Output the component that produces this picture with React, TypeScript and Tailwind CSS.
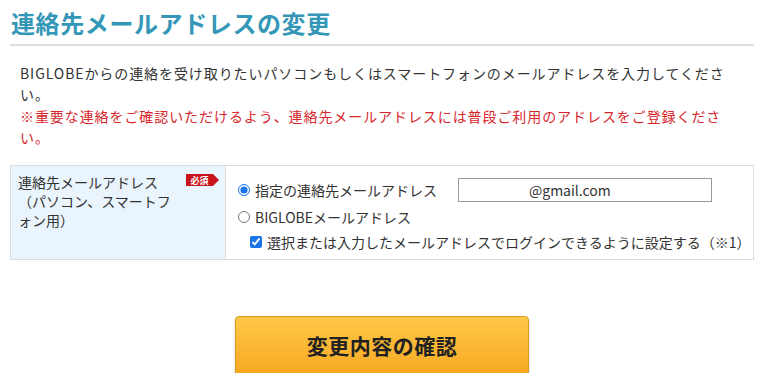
import React from 'react';

const font = { fontFamily: '"Noto Sans CJK JP", "Noto Sans", sans-serif' };

function RequiredBadge() {
  return (
    <span className="absolute left-[175px] top-[8px] flex h-[12px] items-center">
      <span className="flex h-[12px] w-[27px] items-center justify-center bg-[#c8141c] text-[9px] font-bold leading-none text-white">
        必須
      </span>
      <span className="h-0 w-0 border-y-[6px] border-l-[6px] border-y-transparent border-l-[#c8141c]" />
    </span>
  );
}

export default function App() {
  return (
    <div className="h-[373px] w-[780px] overflow-hidden bg-white text-[#333]" style={font}>
      <div className="ml-[10px] w-[744px]">
        <h1 className="border-b-2 border-[#dcdfe2] pb-[5px] pl-[1px] pt-[6px] text-[24px] font-bold leading-[33px] tracking-[0.6px] text-[#3597b7]">
          連絡先メールアドレスの変更
        </h1>

        <div className="mt-[17px] pl-[10px] text-[14px] leading-[21px] tracking-[0.92px]">
          <p className="whitespace-nowrap">
            BIGLOBEからの連絡を受け取りたいパソコンもしくはスマートフォンのメールアドレスを入力してくださ
            <br />
            い。
          </p>
          <p className="mt-[1px] whitespace-nowrap text-[#d7262c]">
            ※重要な連絡をご確認いただけるよう、連絡先メールアドレスには普段ご利用のアドレスをご登録くださ
            <br />
            い。
          </p>
        </div>

        <div className="mt-[17px] flex border border-[#dcdcdc] text-[14px]">
          <div className="relative w-[215px] shrink-0 border-r border-[#dcdcdc] bg-[#e9f4fc] pl-[7px] pt-[7px] leading-[19px]">
            <RequiredBadge />
            <p>連絡先メールアドレス</p>
            <p>（パソコン、スマートフ</p>
            <p>ォン用）</p>
          </div>

          <div className="flex flex-1 flex-col pb-[7px] pl-[12px] pt-[12px]">
            <div className="flex h-[24px] items-center">
              <label className="flex w-[220px] shrink-0 items-center gap-[5px] whitespace-nowrap">
                <input type="radio" name="addr" defaultChecked className="m-0 h-[12px] w-[12px] accent-[#1a73e8]" />
                指定の連絡先メールアドレス
              </label>
              <input
                type="text"
                defaultValue="@gmail.com"
                className="h-[24px] w-[254px] border border-[#999] pl-[70px] text-[14px] text-[#333] outline-none"
              />
            </div>
            <label className="mt-[5px] flex h-[20px] items-center gap-[5px] whitespace-nowrap">
              <input type="radio" name="addr" className="m-0 h-[12px] w-[12px] accent-[#1a73e8]" />
              BIGLOBEメールアドレス
            </label>
            <label className="mt-[5px] flex h-[20px] items-center gap-[5px] whitespace-nowrap pl-[12px]">
              <input type="checkbox" defaultChecked className="m-0 h-[12px] w-[12px] accent-[#1a73e8]" />
              選択または入力したメールアドレスでログインできるように設定する（※1）
            </label>
          </div>
        </div>

        <div className="mt-[56px] flex justify-center">
          <button className="h-[60px] w-[294px] rounded-[4px] border border-[#d99b22] bg-gradient-to-b from-[#fec846] to-[#f7a81e] text-[21px] font-bold tracking-[0.5px] text-[#222] shadow-[0_1px_2px_rgba(0,0,0,0.25)]">
            変更内容の確認
          </button>
        </div>
      </div>
    </div>
  );
}
